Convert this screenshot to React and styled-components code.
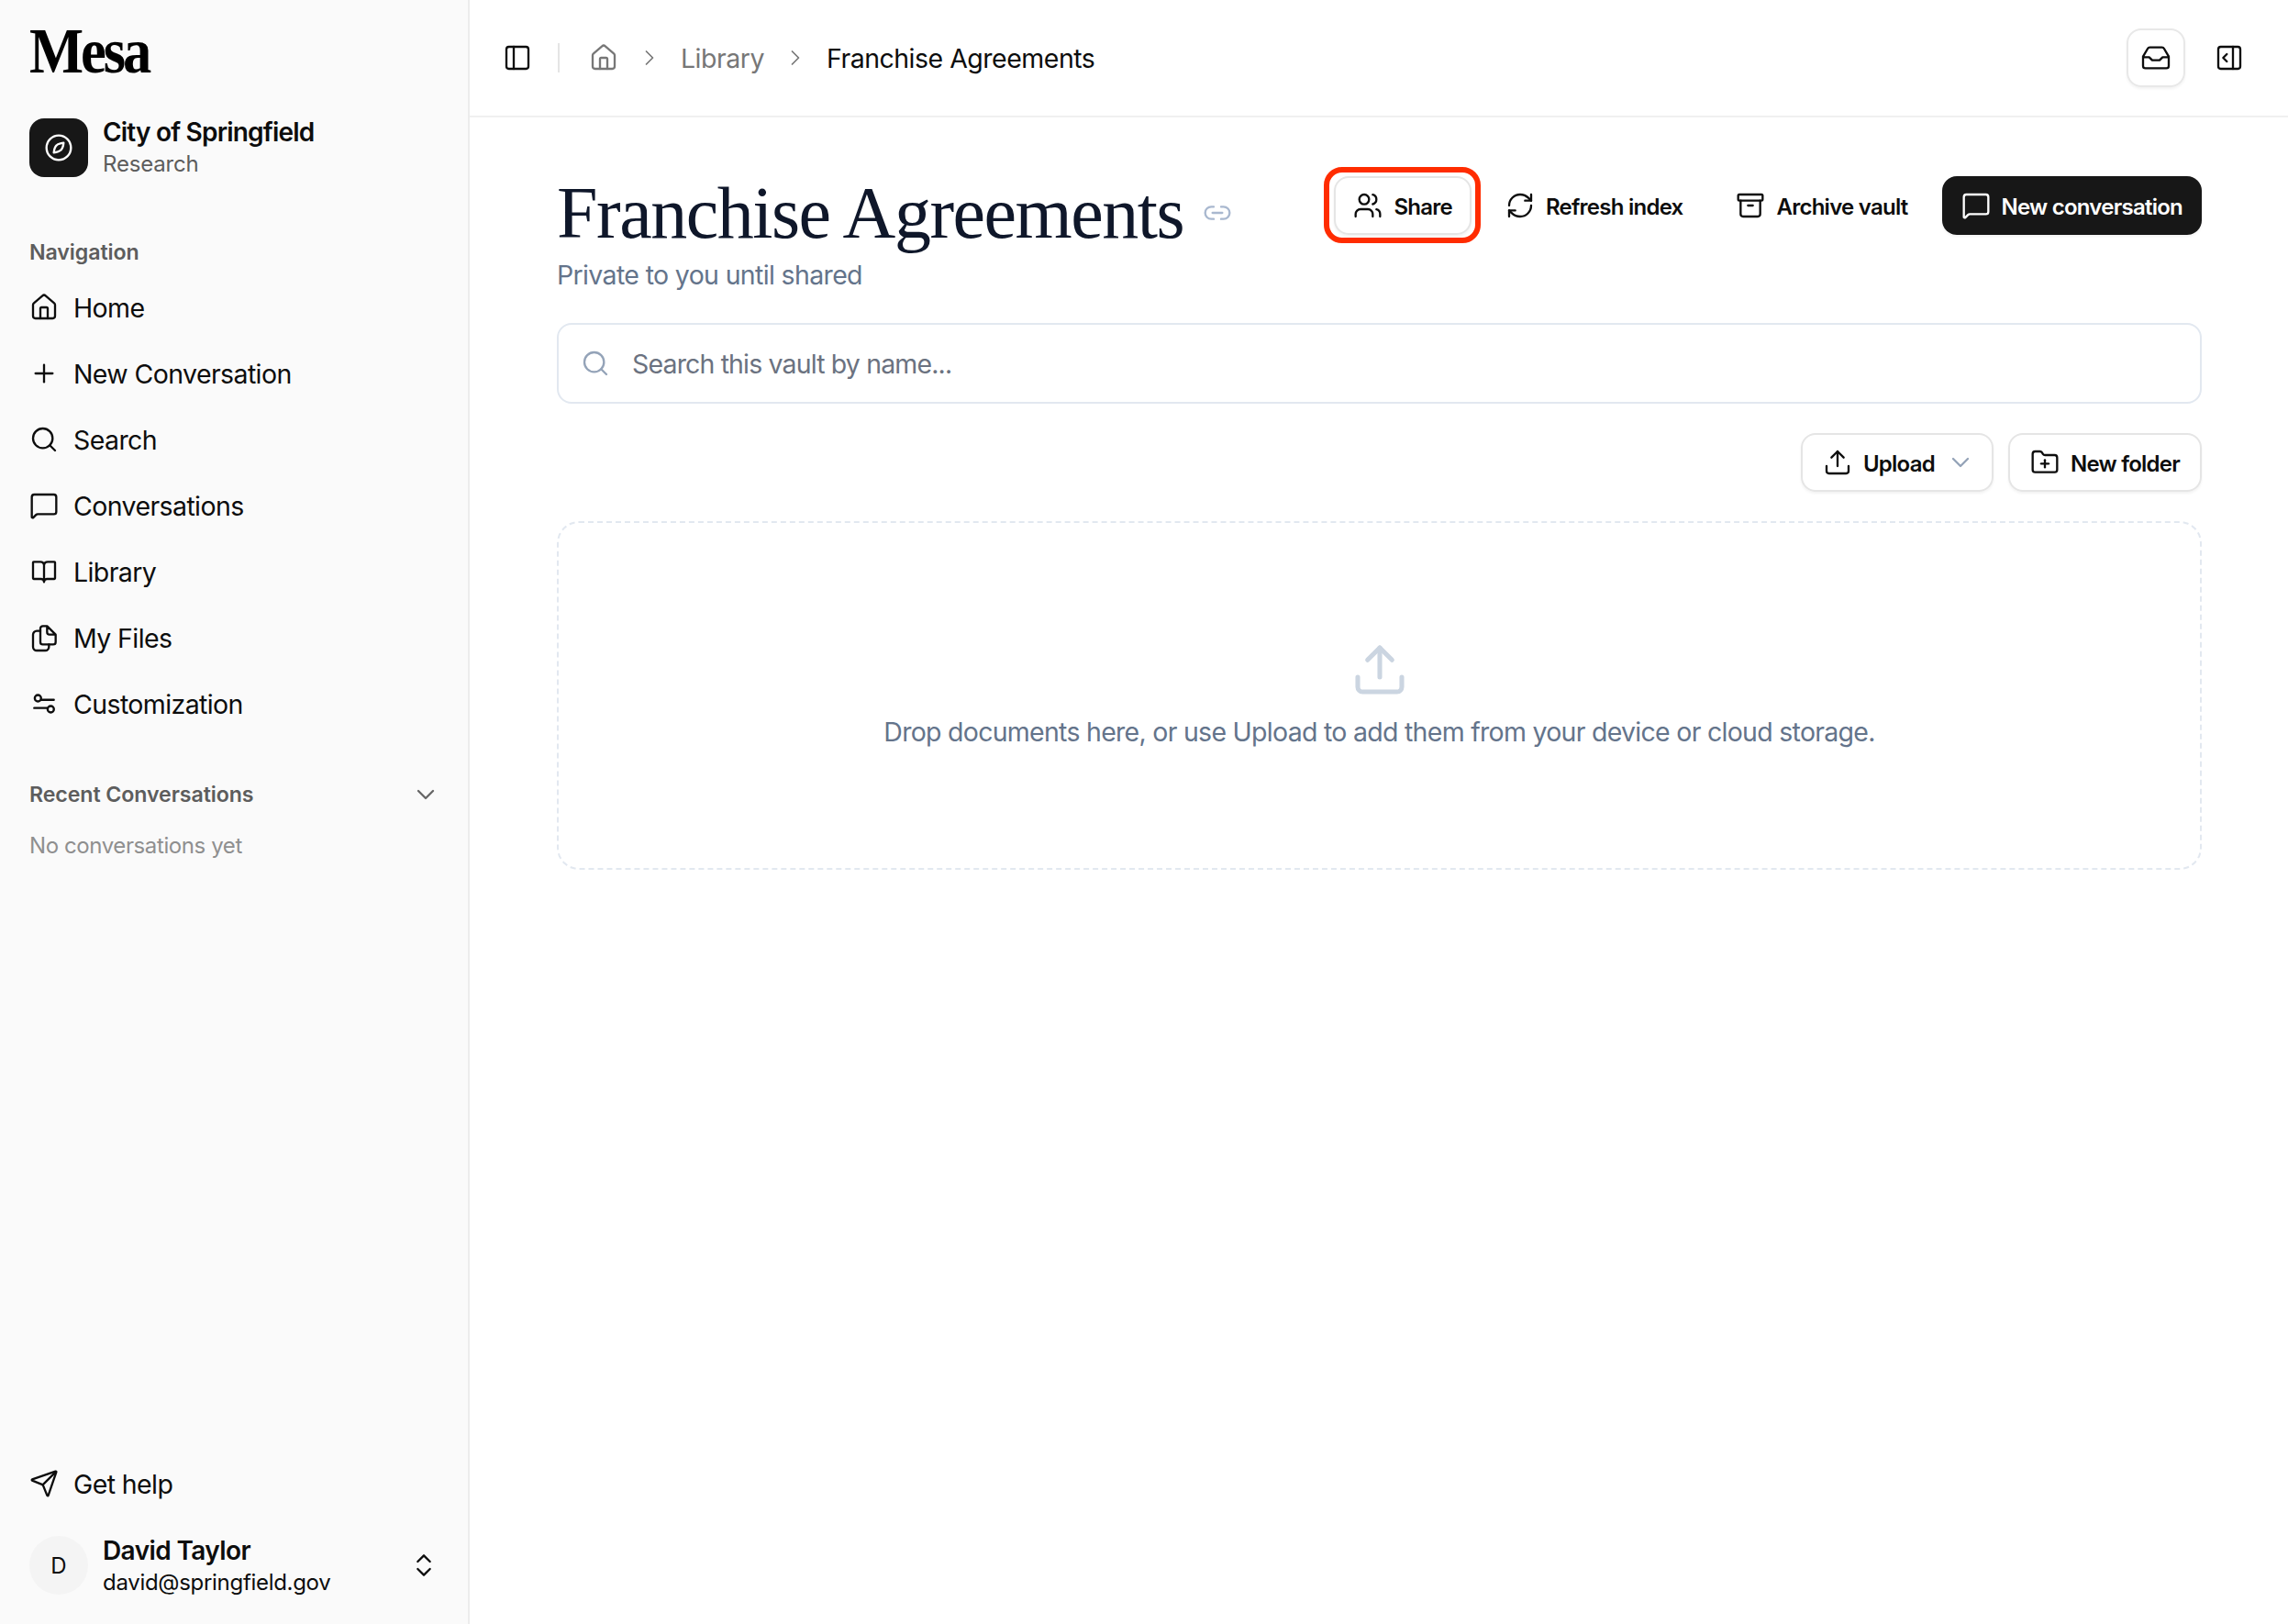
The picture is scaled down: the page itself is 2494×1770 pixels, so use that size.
import React from 'react'
import styled, { createGlobalStyle } from 'styled-components';
import {
  House, Plus, Search, MessageSquare, ChevronDown, ChevronsUpDown, ChevronRight,
  PanelLeft, PanelRightOpen, Link2, Users, RefreshCw, Archive, Upload, FolderPlus, Send,
} from 'lucide-react';

const GlobalStyle = createGlobalStyle`
  html, body {
    margin: 0;
    height: 100%;
    background: #fff;
    font-family: Inter, "Noto Sans", sans-serif;
    color: #0d0d0d;
  }
  * { box-sizing: border-box; }
`;

const stroke = { size: 32, strokeWidth: 1.75 };

const Svg = ({ children }) => (
  <svg width="32" height="32" viewBox="0 0 24 24" fill="none" stroke="currentColor"
    strokeWidth="1.75" strokeLinecap="round" strokeLinejoin="round">
    {children}
  </svg>
);

const CompassLeaf = () => (
  <Svg>
    <circle cx="12" cy="12" r="10" />
    <path d="M16 8C16 8 15.6 12.2 13.8 13.9C12.2 15.5 8 16 8 16C8 16 8.4 11.8 10.2 10.1C11.8 8.5 16 8 16 8Z" />
  </Svg>
);

const BookIcon = () => (
  <Svg>
    <path d="M12 6.5A3 3 0 0 0 9 4H3.5a.5.5 0 0 0-.5.5V17.5a.5.5 0 0 0 .5.5H9.5A2.5 2.5 0 0 1 12 20.5A2.5 2.5 0 0 1 14.5 18H20.5a.5.5 0 0 0 .5-.5V4.5a.5.5 0 0 0-.5-.5H15A3 3 0 0 0 12 6.5ZM12 6.5V20.5" />
  </Svg>
);

const FilesIcon = () => (
  <Svg>
    <path d="M14.5 2.5H11a2 2 0 0 0-2 2V15.5a2 2 0 0 0 2 2H19.5a2 2 0 0 0 2-2V9.5ZM14.5 2.5V7.5a2 2 0 0 0 2 2H21.5" />
    <path d="M9 6.5H6a3 3 0 0 0-3 3V19.5a3 3 0 0 0 3 3H13a3 3 0 0 0 3-3V17.5" />
  </Svg>
);

const SlidersIcon = () => (
  <Svg>
    <circle cx="7" cy="7.5" r="2.6" />
    <path d="M10 8.8H20" />
    <circle cx="17.5" cy="16.5" r="2.6" />
    <path d="M4 15.5H14.5" />
  </Svg>
);

const InboxIcon = () => (
  <Svg>
    <path d="M7 3.5H17a2 2 0 0 1 1.7 1L22.5 11V18.5a2 2 0 0 1-2 2H3.5a2 2 0 0 1-2-2V11L5.3 4.5A2 2 0 0 1 7 3.5ZM1.5 11.5H6.5L9 14H15L17.5 11.5H22.5" />
  </Svg>
);

const navItems = [
  { label: 'Home', icon: <House {...stroke} /> },
  { label: 'New Conversation', icon: <Plus {...stroke} /> },
  { label: 'Search', icon: <Search {...stroke} /> },
  { label: 'Conversations', icon: <MessageSquare {...stroke} /> },
  { label: 'Library', icon: <BookIcon /> },
  { label: 'My Files', icon: <FilesIcon /> },
  { label: 'Customization', icon: <SlidersIcon /> },
];

export default function App() {
  return (
    <Page>
      <GlobalStyle />
      <Sidebar>
        <Logo>Mesa</Logo>
        <OrgRow>
          <OrgBadge><CompassLeaf /></OrgBadge>
          <div>
            <OrgName>City of Springfield</OrgName>
            <OrgSub>Research</OrgSub>
          </div>
        </OrgRow>

        <SectionLabel>Navigation</SectionLabel>
        <NavList>
          {navItems.map((item) => (
            <NavRow key={item.label}>{item.icon}{item.label}</NavRow>
          ))}
        </NavList>

        <RecentHead>
          <SectionLabel as="span">Recent Conversations</SectionLabel>
          <ChevronDown size={32} strokeWidth={1.75} color="#666" />
        </RecentHead>
        <EmptyNote>No conversations yet</EmptyNote>

        <SidebarFoot>
          <NavRow><Send {...stroke} />Get help</NavRow>
          <UserRow>
            <Avatar>D</Avatar>
            <UserText>
              <UserName>David Taylor</UserName>
              <UserMail>david@springfield.gov</UserMail>
            </UserText>
            <ChevronsUpDown size={32} strokeWidth={1.75} />
          </UserRow>
        </SidebarFoot>
      </Sidebar>

      <Main>
        <TopBar>
          <PanelLeft {...stroke} />
          <Divider />
          <Crumbs>
            <House {...stroke} color="#777" />
            <ChevronRight size={28} strokeWidth={1.5} color="#777" />
            <Crumb>Library</Crumb>
            <ChevronRight size={28} strokeWidth={1.5} color="#777" />
            <Crumb $current>Franchise Agreements</Crumb>
          </Crumbs>
          <TopActions>
            <SquareButton><InboxIcon /></SquareButton>
            <PanelRightOpen {...stroke} />
          </TopActions>
        </TopBar>

        <Content>
          <TitleRow>
            <div>
              <TitleLine>
                <Title>Franchise Agreements</Title>
                <Link2 size={32} strokeWidth={1.75} color="#a9b8cf" />
              </TitleLine>
              <Subtitle>Private to you until shared</Subtitle>
            </div>
            <Actions>
              <Button $outlined $marked><Users {...stroke} />Share</Button>
              <Button><RefreshCw {...stroke} />Refresh index</Button>
              <Button><Archive {...stroke} />Archive vault</Button>
              <Button $primary><MessageSquare {...stroke} />New conversation</Button>
            </Actions>
          </TitleRow>

          <SearchBox>
            <Search size={32} strokeWidth={1.75} color="#94a3b8" />
            <SearchHint>Search this vault by name...</SearchHint>
          </SearchBox>

          <Toolbar>
            <Button $outlined $roomy>
              <Upload {...stroke} />Upload
              <MenuCaret size={32} strokeWidth={1.75} color="#94a3b8" />
            </Button>
            <Button $outlined $roomy><FolderPlus {...stroke} />New folder</Button>
          </Toolbar>

          <DropZone>
            <Upload size={64} strokeWidth={1.9} color="#cbd5e1" />
            <DropText>Drop documents here, or use Upload to add them from your device or cloud storage.</DropText>
          </DropZone>
        </Content>
      </Main>
    </Page>
  )
}

const Page = styled.div`
  display: grid;
  grid-template-columns: 512px 1fr;
  height: 100vh;
  overflow: hidden;
`;

const Sidebar = styled.aside`
  display: flex;
  flex-direction: column;
  padding: 0 32px 30px;
  background: #fafafa;
  border-right: 2px solid #ececec;
`;

const Logo = styled.div`
  height: 126px;
  padding-top: 16px;
  font-family: "Liberation Serif", serif;
  font-weight: 700;
  font-size: 70px;
  line-height: 80px;
  letter-spacing: -3.5px;
  color: #000;
  transform: scaleX(0.895);
  transform-origin: left;
`;

const OrgRow = styled.div`
  display: flex;
  align-items: center;
  gap: 16px;
`;

const OrgBadge = styled.div`
  display: flex;
  align-items: center;
  justify-content: center;
  width: 64px;
  height: 64px;
  border-radius: 16px;
  background: #171717;
  color: #fff;
`;

const OrgName = styled.div`
  font-size: 28px;
  font-weight: 600;
  line-height: 36px;
  letter-spacing: -0.8px;
`;

const OrgSub = styled.div`
  padding-top: 1px;
  font-size: 24px;
  line-height: 32px;
  letter-spacing: -0.2px;
  color: #5d5d5d;
`;

const SectionLabel = styled.div`
  margin-top: 63px;
  font-size: 23.2px;
  font-weight: 600;
  line-height: 34px;
  letter-spacing: -0.1px;
  color: #5d5d5d;
  span& { margin-top: 0; }
`;

const NavList = styled.nav`
  margin-top: 7px;
`;

const NavRow = styled.div`
  display: flex;
  align-items: center;
  gap: 16px;
  height: 72px;
  font-size: 28.5px;
  letter-spacing: -0.6px;
`;

const RecentHead = styled.div`
  display: flex;
  align-items: center;
  justify-content: space-between;
  margin-top: 46px;
  margin-right: -2px;
  height: 34px;
`;

const EmptyNote = styled.div`
  margin-top: 23px;
  font-size: 24px;
  line-height: 32px;
  letter-spacing: -0.4px;
  color: #8f8f8f;
`;

const SidebarFoot = styled.div`
  margin-top: auto;
  display: flex;
  flex-direction: column;
  gap: 19px;
`;

const UserRow = styled.div`
  display: flex;
  align-items: center;
  gap: 16px;
`;

const Avatar = styled.div`
  display: flex;
  align-items: center;
  justify-content: center;
  width: 64px;
  height: 64px;
  border-radius: 50%;
  background: #f4f4f4;
  font-size: 24px;
`;

const UserText = styled.div`
  flex: 1;
`;

const UserName = styled.div`
  font-size: 28px;
  font-weight: 600;
  line-height: 36px;
  letter-spacing: -0.6px;
`;

const UserMail = styled.div`
  padding-top: 1px;
  margin-bottom: -1px;
  font-size: 24px;
  line-height: 32px;
  letter-spacing: -0.3px;
`;

const Main = styled.main`
  display: flex;
  flex-direction: column;
  min-width: 0;
`;

const TopBar = styled.header`
  display: flex;
  align-items: center;
  height: 128px;
  padding: 0 48px 0 36px;
  border-bottom: 2px solid #f0f0f0;
`;

const Divider = styled.div`
  width: 2px;
  height: 32px;
  margin: 0 32px 0 28px;
  background: #e5e5e5;
`;

const Crumbs = styled.div`
  display: flex;
  align-items: center;
  gap: 20px;
`;

const Crumb = styled.span`
  font-size: 28.5px;
  letter-spacing: -0.5px;
  color: ${(p) => (p.$current ? '#0d0d0d' : '#777')};
`;

const TopActions = styled.div`
  display: flex;
  align-items: center;
  gap: 32px;
  margin-left: auto;
`;

const SquareButton = styled.div`
  display: flex;
  align-items: center;
  justify-content: center;
  width: 64px;
  height: 64px;
  border: 2px solid #e8e8e8;
  border-radius: 16px;
  box-shadow: 0 2px 3px rgba(0, 0, 0, 0.05);
`;

const Content = styled.div`
  display: flex;
  flex-direction: column;
  padding: 64px 94px 0 95px;
`;

const TitleRow = styled.div`
  display: flex;
  align-items: flex-start;
  justify-content: space-between;
`;

const TitleLine = styled.div`
  display: flex;
  align-items: center;
  gap: 21px;
`;

const Title = styled.h1`
  margin: 0;
  font-family: "Liberation Serif", serif;
  font-size: 80px;
  font-weight: 400;
  line-height: 80px;
  letter-spacing: -1.5px;
  color: #0f172a;
`;

const Subtitle = styled.div`
  margin-top: 8px;
  font-size: 28.5px;
  line-height: 40px;
  letter-spacing: -0.65px;
  color: #64748b;
`;

const Actions = styled.div`
  display: flex;
  gap: 16px;
`;

const Button = styled.button`
  position: relative;
  display: flex;
  align-items: center;
  gap: 12px;
  height: 64px;
  padding: 2px ${(p) => (p.$roomy ? '22px' : '19px')} 0;
  border: 2px solid ${(p) => (p.$outlined ? '#e5e5e5' : 'transparent')};
  border-radius: 16px;
  background: ${(p) => (p.$primary ? '#171717' : 'transparent')};
  color: ${(p) => (p.$primary ? '#fff' : '#0d0d0d')};
  font-family: inherit;
  font-size: 24px;
  font-weight: 600;
  letter-spacing: -0.75px;
  box-shadow: ${(p) => (p.$outlined || p.$primary ? '0 2px 3px rgba(0, 0, 0, 0.05)' : 'none')};
  svg { margin-top: -2px; }
  ${(p) => p.$marked && `
    &::after {
      content: "";
      position: absolute;
      inset: -12px -12px -11px -13px;
      border: 6px solid #ff2c00;
      border-radius: 20px;
    }
  `}
`;

const MenuCaret = styled(ChevronDown)`
  margin: -2px -4px 0 0;
`;

const SearchBox = styled.div`
  display: flex;
  align-items: center;
  gap: 24px;
  height: 88px;
  margin-top: 32px;
  padding: 0 24px;
  border: 2px solid #e2e8f0;
  border-radius: 16px;
`;

const SearchHint = styled.span`
  font-size: 28.5px;
  letter-spacing: -0.85px;
  color: #6b7280;
`;

const Toolbar = styled.div`
  display: flex;
  justify-content: flex-end;
  gap: 16px;
  margin-top: 32px;
`;

const DropZone = styled.div`
  display: flex;
  flex-direction: column;
  align-items: center;
  justify-content: center;
  gap: 16px;
  height: 380px;
  margin-top: 32px;
  border: 2px dashed #e2e8f0;
  border-radius: 24px;
`;

const DropText = styled.div`
  font-size: 28.5px;
  line-height: 40px;
  letter-spacing: -0.72px;
  color: #64748b;
`;
